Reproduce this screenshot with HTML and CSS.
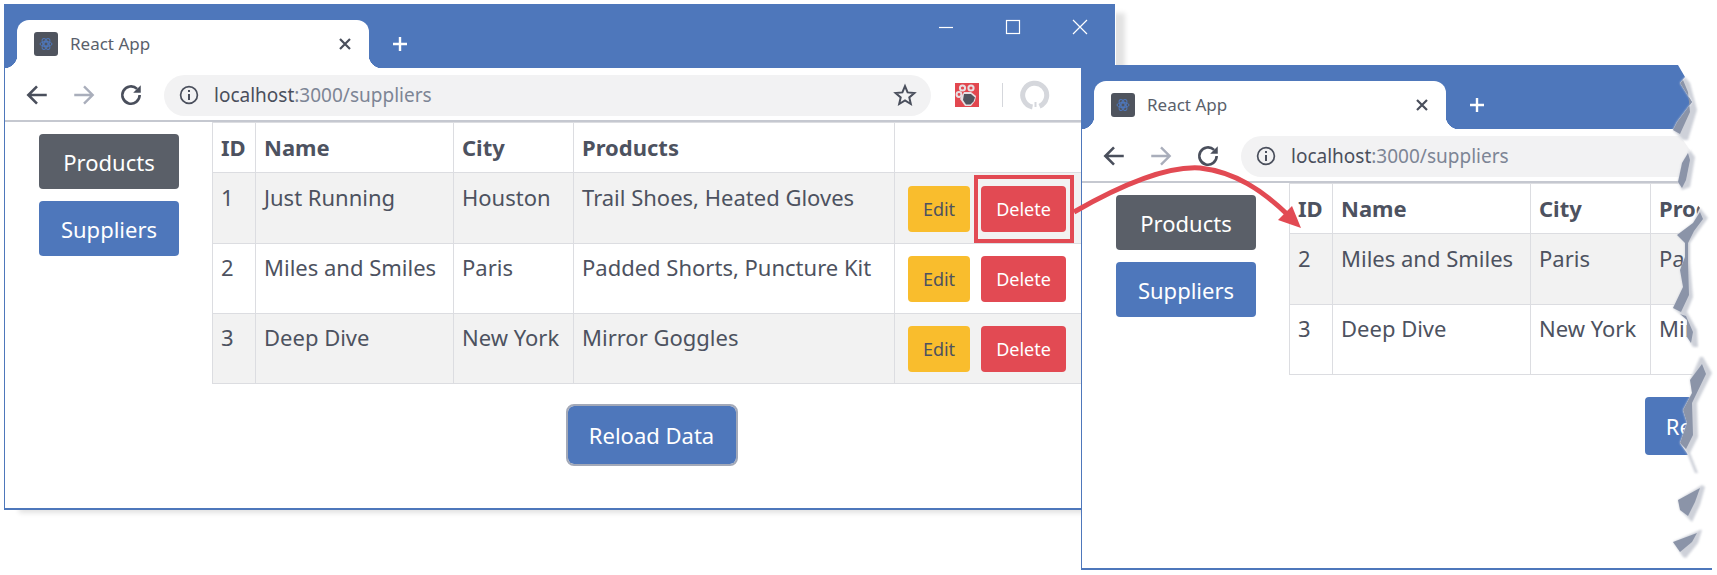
FILE: index.html
```html
<!DOCTYPE html>
<html lang="en">
<head>
    <meta charset="UTF-8">
    <meta name="viewport" content="width=device-width, initial-scale=1.0">
    <title>React App</title>
    <link rel="stylesheet" href="styles.css">
</head>
<body>

<!-- first browser window -->
<div class="window window-main">
    <div class="window-inner">
        <div class="titlebar">
            <div class="tab">
                <svg class="favicon" viewBox="0 0 24 24"><rect width="24" height="24" rx="3" fill="#4f545e"/><g fill="none" stroke="#4e77bb" stroke-width="1"><circle cx="12" cy="12" r="2"/><ellipse cx="12" cy="12" rx="6" ry="2.6"/><ellipse cx="12" cy="12" rx="6" ry="2.6" transform="rotate(60 12 12)"/><ellipse cx="12" cy="12" rx="6" ry="2.6" transform="rotate(120 12 12)"/></g></svg>
                <span class="tab-title">React App</span>
                <svg class="tab-close" viewBox="0 0 14 14"><path d="M2 2L12 12M12 2L2 12" stroke="#4a4f5c" stroke-width="2.2"/></svg>
            </div>
            <svg class="new-tab" viewBox="0 0 18 18"><path d="M9 2V16M2 9H16" stroke="#fff" stroke-width="2.4"/></svg>
            <div class="controls">
                <svg viewBox="0 0 16 16"><path d="M1 8.5H15" stroke="#fff" stroke-width="1.2"/></svg>
                <svg viewBox="0 0 16 16"><rect x="1.5" y="1.5" width="13" height="13" fill="none" stroke="#fff" stroke-width="1.2"/></svg>
                <svg viewBox="0 0 16 16"><path d="M1 1L15 15M15 1L1 15" stroke="#fff" stroke-width="1.2"/></svg>
            </div>
        </div>
        <div class="toolbar">
            <svg class="nav-icon" viewBox="0 0 24 24"><path d="M21 12H4M12 4L4 12L12 20" fill="none" stroke="#4a4f5c" stroke-width="2.4"/></svg>
            <svg class="nav-icon" viewBox="0 0 24 24"><path d="M3 12H20M12 4L20 12L12 20" fill="none" stroke="#a9aebb" stroke-width="2.2"/></svg>
            <svg class="nav-icon" viewBox="0 0 24 24"><path d="M20 12A8 8 0 1 1 17.6 6.3" fill="none" stroke="#4a4f5c" stroke-width="2.4"/><path d="M21 3V10H14Z" fill="#4a4f5c"/></svg>
            <div class="address">
                <svg class="info" viewBox="0 0 20 20"><circle cx="10" cy="10" r="8.4" fill="none" stroke="#4a4f5c" stroke-width="1.7"/><path d="M10 9V15M10 5V7" stroke="#4a4f5c" stroke-width="2"/></svg>
                <span class="url">localhost<span class="url-rest">:3000/suppliers</span></span>
                <svg class="star" viewBox="0 0 24 24"><path d="M12 3.2L14.6 9.4L21.4 10L16.3 14.4L17.8 21L12 17.5L6.2 21L7.7 14.4L2.6 10L9.4 9.4Z" fill="none" stroke="#4a4f5c" stroke-width="2"/></svg>
            </div>
            <svg class="ext" viewBox="0 0 24 24"><rect width="24" height="24" fill="#e2474f"/><g fill="none" stroke="#e6dfe2" stroke-width="2"><circle cx="7.5" cy="5" r="2.6"/><circle cx="16" cy="5" r="2.6"/><circle cx="4" cy="11.5" r="2.4"/></g><path d="M5 16L9 9H16L21 13L20 18L16 23H10Z" fill="#e6dfe2"/><path d="M9 11H16L20 14.5L18.5 18.5L15.5 21.5H11L8 17Z" fill="#50555f"/></svg>
            <span class="divider"></span>
            <svg class="profile" viewBox="0 0 30 30"><path d="M12.5 27A12 12 0 1 1 19.5 26.2" fill="none" stroke="#d5d7dc" stroke-width="5"/><path d="M15.5 27V22" stroke="#d5d7dc" stroke-width="2"/></svg>
        </div>
        <div class="page">
            <div class="sidebar">
                <button class="btn btn-gray">Products</button>
                <button class="btn btn-blue">Suppliers</button>
            </div>
            <div class="main">
                <table class="suppliers">
                    <thead>
                        <tr><th class="col-id">ID</th><th class="col-name">Name</th><th class="col-city">City</th><th class="col-products">Products</th><th></th></tr>
                    </thead>
                    <tbody>
                        <tr>
                            <td>1</td><td>Just Running</td><td>Houston</td><td>Trail Shoes, Heated Gloves</td>
                            <td class="actions"><button class="btn-sm btn-yellow">Edit</button><button class="btn-sm btn-red">Delete</button></td>
                        </tr>
                        <tr>
                            <td>2</td><td>Miles and Smiles</td><td>Paris</td><td>Padded Shorts, Puncture Kit</td>
                            <td class="actions"><button class="btn-sm btn-yellow">Edit</button><button class="btn-sm btn-red">Delete</button></td>
                        </tr>
                        <tr>
                            <td>3</td><td>Deep Dive</td><td>New York</td><td>Mirror Goggles</td>
                            <td class="actions"><button class="btn-sm btn-yellow">Edit</button><button class="btn-sm btn-red">Delete</button></td>
                        </tr>
                    </tbody>
                </table>
                <div class="reload-row"><button class="btn btn-blue btn-reload btn-focus">Reload Data</button></div>
            </div>
        </div>
    </div>
</div>

<!-- second browser window, torn off on the right -->
<div class="window window-second">
    <div class="window-inner">
        <div class="titlebar">
            <div class="tab">
                <svg class="favicon" viewBox="0 0 24 24"><rect width="24" height="24" rx="3" fill="#4f545e"/><g fill="none" stroke="#4e77bb" stroke-width="1"><circle cx="12" cy="12" r="2"/><ellipse cx="12" cy="12" rx="6" ry="2.6"/><ellipse cx="12" cy="12" rx="6" ry="2.6" transform="rotate(60 12 12)"/><ellipse cx="12" cy="12" rx="6" ry="2.6" transform="rotate(120 12 12)"/></g></svg>
                <span class="tab-title">React App</span>
                <svg class="tab-close" viewBox="0 0 14 14"><path d="M2 2L12 12M12 2L2 12" stroke="#4a4f5c" stroke-width="2.2"/></svg>
            </div>
            <svg class="new-tab" viewBox="0 0 18 18"><path d="M9 2V16M2 9H16" stroke="#fff" stroke-width="2.4"/></svg>
        </div>
        <div class="toolbar">
            <svg class="nav-icon" viewBox="0 0 24 24"><path d="M21 12H4M12 4L4 12L12 20" fill="none" stroke="#4a4f5c" stroke-width="2.4"/></svg>
            <svg class="nav-icon" viewBox="0 0 24 24"><path d="M3 12H20M12 4L20 12L12 20" fill="none" stroke="#a9aebb" stroke-width="2.2"/></svg>
            <svg class="nav-icon" viewBox="0 0 24 24"><path d="M20 12A8 8 0 1 1 17.6 6.3" fill="none" stroke="#4a4f5c" stroke-width="2.4"/><path d="M21 3V10H14Z" fill="#4a4f5c"/></svg>
            <div class="address">
                <svg class="info" viewBox="0 0 20 20"><circle cx="10" cy="10" r="8.4" fill="none" stroke="#4a4f5c" stroke-width="1.7"/><path d="M10 9V15M10 5V7" stroke="#4a4f5c" stroke-width="2"/></svg>
                <span class="url">localhost<span class="url-rest">:3000/suppliers</span></span>
            </div>
        </div>
        <div class="page">
            <div class="sidebar">
                <button class="btn btn-gray">Products</button>
                <button class="btn btn-blue">Suppliers</button>
            </div>
            <div class="main">
                <table class="suppliers">
                    <thead>
                        <tr><th class="col-id">ID</th><th class="col-name">Name</th><th class="col-city">City</th><th class="col-products">Products</th><th></th></tr>
                    </thead>
                    <tbody>
                        <tr>
                            <td>2</td><td>Miles and Smiles</td><td>Paris</td><td>Padded Shorts, Puncture Kit</td>
                            <td class="actions"></td>
                        </tr>
                        <tr>
                            <td>3</td><td>Deep Dive</td><td>New York</td><td>Mirror Goggles</td>
                            <td class="actions"></td>
                        </tr>
                    </tbody>
                </table>
                <div class="reload-row"><button class="btn btn-blue btn-reload">Reload Data</button></div>
            </div>
        </div>
    </div>
</div>

<!-- annotations drawn on top: torn paper edge, highlight box, arrow -->
<svg class="overlay" viewBox="0 0 1717 575">
    <path fill="#fff" d="M1679 60L1678 65L1685 77L1680 83L1692 102L1677 122L1673 130L1683 140L1690 150L1682 163L1678 182L1682 190L1690 195L1700 208L1693 223L1677 235L1685 243L1685 257L1680 270L1683 287L1673 308L1687 320L1687 337L1693 347L1700 357L1690 380L1692 393L1683 410L1687 423L1680 443L1687 453L1695 473L1702 485L1678 500L1680 510L1692 522L1700 530L1673 542L1683 557L1712 568L1717 568L1717 60Z"/>

    <g class="tear-light">
        <path d="M1685 77L1680 83L1692 102L1677 122L1673 130L1683 140L1688 140L1697 110L1690 83Z"/>
        <path d="M1690 150L1682 163L1678 182L1682 190L1690 187L1695 157Z"/>
        <path d="M1700 208L1693 223L1677 235L1685 243L1685 257L1680 270L1683 287L1673 308L1687 320L1687 337L1693 347L1698 347L1697 330L1687 312L1693 297L1690 263L1690 243L1697 233L1708 218Z"/>
        <path d="M1700 357L1690 380L1692 393L1683 410L1687 423L1680 443L1687 453L1695 473L1698 473L1690 453L1698 437L1697 403L1712 373L1703 357Z"/>
        <path d="M1702 485L1678 500L1680 510L1692 522L1700 505L1705 487Z"/>
        <path d="M1700 530L1673 542L1683 557L1686 558L1698 543L1702 530Z"/>
    </g>
    <g class="tear-dark">
        <path d="M1683 80L1680 83L1692 102L1677 122L1673 130L1680 134L1690 112L1688 92Z"/>
        <path d="M1688 153L1682 163L1678 182L1682 188L1686 180L1690 160Z"/>
        <path d="M1700 212L1693 223L1677 235L1685 243L1685 257L1680 270L1683 287L1673 308L1681 312L1689 295L1688 263L1688 243L1694 231L1703 219Z"/>
        <path d="M1680 314L1687 320L1687 337L1691 343L1693 332L1686 316Z"/>
        <path d="M1702 364L1690 380L1692 393L1683 410L1687 423L1680 443L1686 449L1693 435L1692 403L1706 374Z"/>
        <path d="M1700 488L1678 500L1680 510L1688 516L1695 502Z"/>
        <path d="M1697 533L1673 542L1680 552L1692 542Z"/>
    </g>

    <rect class="mark-box" x="976" y="177" width="96" height="64"/>
    <path class="mark-line" d="M1074 212C1130 180 1170 166 1200 168C1235 172 1262 190 1288 215"/>
    <path class="mark-head" d="M1292 206L1278 220L1301 228Z"/>
</svg>

</body>
</html>
```

FILE: styles.css
```css
body {
    margin: 0;
    background-color: #fff;
    font-family: "Noto Sans", "Open Sans", sans-serif;
    color: #4d5260;
}

.window {
    position: absolute;
    background-color: #fff;
    border-left: 1px solid #4e77bb;
    border-bottom: 2px solid #4e77bb;
    overflow: hidden;
}

.window-main {
    left: 4px;
    top: 4px;
    width: 1111px;
    height: 504px;
    box-shadow: 12px 6px 5px -3px #e2e2e2;
}

.window-second {
    left: 1081px;
    top: 65px;
    width: 630px;
    height: 503px;
}

.window-inner {
    width: 1110px;
}

/* title bar */
.titlebar {
    display: flex;
    align-items: flex-end;
    height: 64px;
    background-color: #4e77bb;
}

.tab {
    display: flex;
    align-items: center;
    position: relative;
    width: 352px;
    height: 48px;
    margin-left: 12px;
    box-sizing: border-box;
    padding: 0 17px;
    background-color: #fff;
    border-radius: 12px 12px 0 0;
}

.tab::before,
.tab::after {
    content: "";
    position: absolute;
    bottom: 0;
    width: 13px;
    height: 13px;
}

.tab::before {
    left: -13px;
    background: radial-gradient(circle at 0 0, #4e77bb 13px, #fff 13.5px);
}

.tab::after {
    right: -13px;
    background: radial-gradient(circle at 100% 0, #4e77bb 13px, #fff 13.5px);
}

.favicon {
    width: 24px;
    height: 24px;
    margin-right: 12px;
}

.tab-title {
    flex: 1;
    padding-bottom: 2px;
    font-size: 17px;
    color: #5a5f6b;
}

.tab-close {
    width: 14px;
    height: 14px;
}

.new-tab {
    width: 18px;
    height: 18px;
    margin: 0 0 15px 22px;
}

.controls {
    display: flex;
    gap: 51px;
    margin-left: auto;
    padding: 0 27px 33px 0;
}

.controls svg {
    width: 16px;
    height: 16px;
}

/* toolbar */
.toolbar {
    display: flex;
    align-items: center;
    height: 50px;
    padding: 2px 0 0 19px;
    border-bottom: 2px solid #c5c8d0;
}

.nav-icon {
    width: 26px;
    height: 26px;
    margin-right: 21px;
}

.address {
    display: flex;
    align-items: center;
    width: 767px;
    height: 41px;
    margin-left: -1px;
    padding: 0 15px;
    box-sizing: border-box;
    background-color: #f2f2f3;
    border-radius: 21px;
}

.info {
    width: 20px;
    height: 20px;
    margin-right: 15px;
}

.url {
    flex: 1;
    font-size: 19px;
    color: #4a4f5c;
}

.url-rest {
    color: #7d8595;
}

.star {
    width: 24px;
    height: 24px;
    margin-right: -1px;
}

.ext {
    width: 24px;
    height: 24px;
    margin-left: 24px;
}

.divider {
    width: 1px;
    height: 24px;
    margin-left: 23px;
    background-color: #d5d7dc;
}

.profile {
    width: 30px;
    height: 30px;
    margin-left: 17px;
}

/* page content */
.page {
    display: flex;
}

.sidebar {
    display: flex;
    flex-direction: column;
    gap: 12px;
    width: 140px;
    padding: 12px 33px 0 34px;
}

.btn {
    height: 55px;
    border: none;
    border-radius: 4px;
    font-family: inherit;
    font-size: 22px;
    color: #fff;
}

.btn-gray {
    background-color: #5a5f68;
}

.btn-blue {
    background-color: #4e77bb;
}

.main {
    width: 879px;
}

.suppliers {
    width: 879px;
    border-collapse: collapse;
    table-layout: fixed;
    font-size: 22px;
}

.suppliers th,
.suppliers td {
    padding: 0 8px;
    border: 1px solid #dcdde1;
    text-align: left;
    vertical-align: top;
    box-sizing: border-box;
}

.suppliers th {
    height: 50px;
    padding-top: 9px;
    font-weight: 700;
}

.suppliers td {
    height: 70px;
    padding-top: 8px;
}

.suppliers tbody tr:first-child td {
    height: 71px;
    padding-top: 9px;
}

.col-id { width: 43px; }
.col-name { width: 198px; }
.col-city { width: 120px; }
.col-products { width: 321px; }

.suppliers tbody tr:nth-child(odd) {
    background-color: #f2f2f2;
}

.suppliers td.actions {
    padding: 12px 0 0 13px;
}

.suppliers tbody tr:first-child td.actions {
    padding-top: 13px;
}

.btn-sm {
    width: 62px;
    height: 46px;
    margin-right: 11px;
    border: none;
    border-radius: 4px;
    font-family: inherit;
    font-size: 18px;
}

.btn-sm + .btn-sm {
    width: 85px;
}

.btn-yellow {
    background-color: #f9bd2d;
    color: #4d5260;
}

.btn-red {
    background-color: #e24a53;
    color: #fff;
}

.reload-row {
    display: flex;
    justify-content: center;
    padding-top: 22px;
}

.btn-reload {
    width: 168px;
    height: 58px;
}

.btn-focus {
    outline: 2px solid #a3a9b8;
    border-radius: 6px;
}

/* annotations */
.overlay {
    position: absolute;
    left: 0;
    top: 0;
    width: 1717px;
    height: 575px;
}

.tear-light {
    fill: #ced1d9;
    filter: blur(0.8px);
}

.tear-dark {
    fill: #8b94a8;
    filter: blur(0.5px);
}

.mark-box {
    fill: none;
    stroke: #e24a53;
    stroke-width: 4;
}

.mark-line {
    fill: none;
    stroke: #e24a53;
    stroke-width: 5;
}

.mark-head {
    fill: #e24a53;
}
```
